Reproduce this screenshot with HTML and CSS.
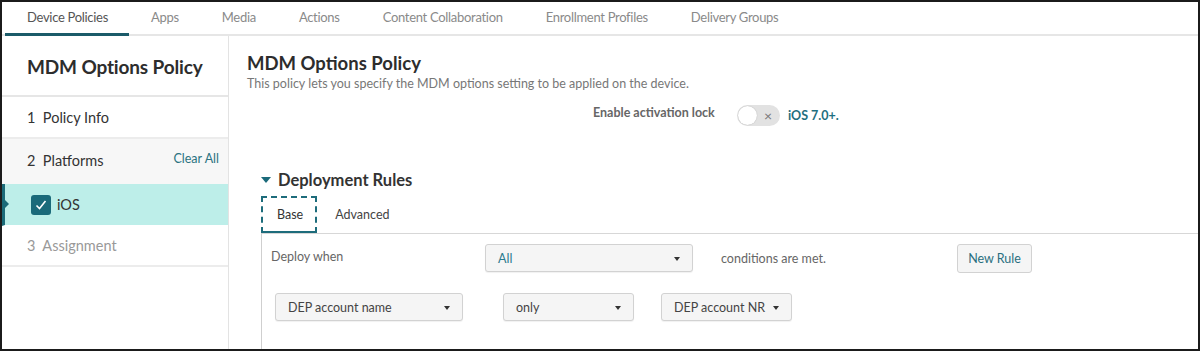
FILE: index.html
```html
<!DOCTYPE html>
<html lang="en">
<head>
    <meta charset="UTF-8">
    <title>MDM Options Policy</title>
    <link rel="stylesheet" href="styles.css">
</head>
<body>
<div class="frame">
    <div class="topnav">
        <a class="tab active">Device Policies</a>
        <a class="tab">Apps</a>
        <a class="tab">Media</a>
        <a class="tab">Actions</a>
        <a class="tab">Content Collaboration</a>
        <a class="tab">Enrollment Profiles</a>
        <a class="tab">Delivery Groups</a>
    </div>
    <div class="page">
        <div class="sidebar">
            <div class="side-title">MDM Options Policy</div>
            <div class="step">1&nbsp; Policy Info</div>
            <div class="step grey">2&nbsp; Platforms <span class="clear">Clear All</span></div>
            <div class="step platform">
                <span class="check">
                    <svg width="14" height="14" viewBox="0 0 14 14"><path d="M2.5 7.5 L5.5 10.5 L11.5 3" fill="none" stroke="#fff" stroke-width="1.6"/></svg>
                </span>
                iOS
            </div>
            <div class="step muted">3&nbsp; Assignment</div>
        </div>
        <div class="main">
            <h1>MDM Options Policy</h1>
            <p class="desc">This policy lets you specify the MDM options setting to be applied on the device.</p>
            <div class="option">
                <span class="opt-label">Enable activation lock</span>
                <span class="toggle"><span class="knob"></span><span class="x">&times;</span></span>
                <span class="opt-note">iOS 7.0+.</span>
            </div>
            <div class="section-head"><span class="caret-down"></span>Deployment Rules</div>
            <div class="rule-tabs">
                <span class="rtab current">Base</span>
                <span class="rtab">Advanced</span>
            </div>
            <div class="rules">
                <div class="rule-row">
                    <span class="deploy-label">Deploy when</span>
                    <span class="select sel-all"><span class="teal">All</span><span class="arrow"></span></span>
                    <span class="cond">conditions are met.</span>
                    <span class="btn">New Rule</span>
                </div>
                <div class="rule-row second">
                    <span class="select sel-name">DEP account name<span class="arrow"></span></span>
                    <span class="select sel-op">only<span class="arrow"></span></span>
                    <span class="select sel-val">DEP account NR<span class="arrow"></span></span>
                </div>
            </div>
        </div>
    </div>
</div>
</body>
</html>
```

FILE: styles.css
```css
body {
    margin: 0;
    font-family: Lato, "Noto Sans", sans-serif;
    background-color: #fff;
}
.frame {
    height: 351px;
    box-sizing: border-box;
    border: 2px solid #1b1b1b;
    overflow: hidden;
    display: flex;
    flex-direction: column;
}
.topnav {
    display: flex;
    height: 34px;
    border-bottom: 2px solid #e6e6e6;
    padding-left: 3px;
}
.tab {
    padding: 0 21.5px 0 22px;
    line-height: 31px;
    font-size: 13px;
    letter-spacing: -0.3px;
    color: #8a8a8a;
    border-bottom: 3px solid transparent;
    margin-bottom: -2px;
}
.tab + .tab {
    padding-left: 21.5px;
}
.tab.active {
    color: #555;
    border-bottom-color: #1b5b69;
}
.page {
    flex: 1;
    display: flex;
}
.sidebar {
    width: 226px;
    border-right: 1px solid #e3e3e3;
}
.side-title {
    height: 59px;
    line-height: 62px;
    padding-left: 25px;
    font-size: 19px;
    letter-spacing: -0.15px;
    font-weight: bold;
    color: #2d2d2d;
    border-bottom: 2px solid #e6e6e6;
}
.step {
    height: 40px;
    padding-left: 25px;
    font-size: 14.5px;
    color: #333;
    border-bottom: 2px solid #ececec;
    display: flex;
    align-items: center;
}
.step.grey {
    background-color: #f7f7f7;
    height: 45px;
    border-bottom: none;
    padding-bottom: 3px;
    box-sizing: border-box;
}
.clear {
    margin-left: auto;
    margin-right: 9px;
    font-size: 12.5px;
    color: #2b7381;
    margin-top: -4px;
}
.step.platform {
    height: 41px;
    background-color: #bdeee9;
    border-left: 3px solid #1b6a78;
    padding-left: 26px;
    position: relative;
    border-bottom: 1px solid #fff;
}
.step.platform::before {
    content: "";
    position: absolute;
    left: 0;
    top: 16px;
    border-left: 4px solid #1b6a78;
    border-top: 4px solid transparent;
    border-bottom: 4px solid transparent;
}
.check {
    width: 20px;
    height: 20px;
    border-radius: 3px;
    background-color: #1b6a7a;
    display: flex;
    align-items: center;
    justify-content: center;
    margin-right: 6px;
}
.step.muted {
    color: #999;
    height: 39px;
}
.main {
    flex: 1;
    padding-left: 18px;
}
h1 {
    margin: 15px 0 0;
    font-size: 18.5px;
    font-weight: bold;
    color: #2d2d2d;
    line-height: 24px;
}
.desc {
    margin: 1px 0 0;
    font-size: 12.5px;
    color: #777;
}
.option {
    display: flex;
    align-items: center;
    margin-left: 346px;
    margin-top: 12px;
    height: 24px;
}
.opt-label {
    font-size: 12.5px;
    font-weight: bold;
    color: #666;
    width: 144px;
    margin-top: -6px;
}
.toggle {
    width: 43px;
    height: 21px;
    border-radius: 11px;
    background-color: #e2e2e2;
    display: flex;
    align-items: center;
    position: relative;
}
.knob {
    width: 19px;
    height: 19px;
    border-radius: 50%;
    background-color: #fff;
    margin-left: 1px;
    box-shadow: 0 0 1px rgba(0,0,0,0.3);
}
.x {
    margin-left: 7px;
    font-size: 14px;
    color: #777;
}
.opt-note {
    margin-left: 8px;
    font-size: 12.5px;
    font-weight: bold;
    color: #1f6f80;
}
.section-head {
    margin: 43px 0 0 14px;
    font-size: 16.5px;
    font-weight: bold;
    color: #333;
    display: flex;
    align-items: center;
}
.caret-down {
    border-top: 6px solid #1b6a7a;
    border-left: 5px solid transparent;
    border-right: 5px solid transparent;
    margin-right: 7px;
}
.rule-tabs {
    display: flex;
    margin: 6px 0 0 14px;
    height: 37px;
    align-items: stretch;
}
.rtab {
    font-size: 12.5px;
    color: #444;
    display: flex;
    align-items: center;
    padding: 0 16px 0 18px;
}
.rtab.current {
    border: 2px dashed #1d6c7b;
    border-bottom: 2px solid #1d6c7b;
    padding: 0 12px 0 14px;
    color: #333;
}
.rules {
    margin-left: 14px;
    border-top: 1px solid #d7d7d7;
    border-left: 1px solid #cfcfcf;
    height: 120px;
}
.rule-row {
    display: flex;
    align-items: center;
    height: 28px;
    margin-top: 10px;
    font-size: 12.5px;
    color: #666;
}
.rule-row.second {
    margin-top: 21px;
    padding-left: 13px;
}
.deploy-label {
    width: 214px;
    padding-left: 9px;
    margin-top: -4px;
}
.select {
    box-sizing: border-box;
    height: 28px;
    border: 1px solid #d2d2d2;
    border-radius: 3px;
    background-color: #f5f5f5;
    box-shadow: 0 1px 1px rgba(0,0,0,0.06);
    display: flex;
    align-items: center;
    padding: 0 12px;
    color: #444;
    position: relative;
}
.teal {
    color: #2a7b8e;
}
.arrow {
    position: absolute;
    right: 12px;
    top: 12px;
    border-top: 4px solid #333;
    border-left: 3.5px solid transparent;
    border-right: 3.5px solid transparent;
}
.sel-all {
    width: 208px;
}
.cond {
    margin-left: 28px;
    width: 236px;
}
.btn {
    box-sizing: border-box;
    height: 29px;
    width: 75px;
    border: 1px solid #d2d2d2;
    border-radius: 3px;
    background-color: #f5f5f5;
    display: flex;
    align-items: center;
    justify-content: center;
    color: #2a6f80;
    font-size: 12.5px;
}
.sel-name {
    width: 188px;
}
.sel-op {
    width: 131px;
    margin-left: 40px;
}
.sel-val {
    width: 131px;
    margin-left: 27px;
}
```
